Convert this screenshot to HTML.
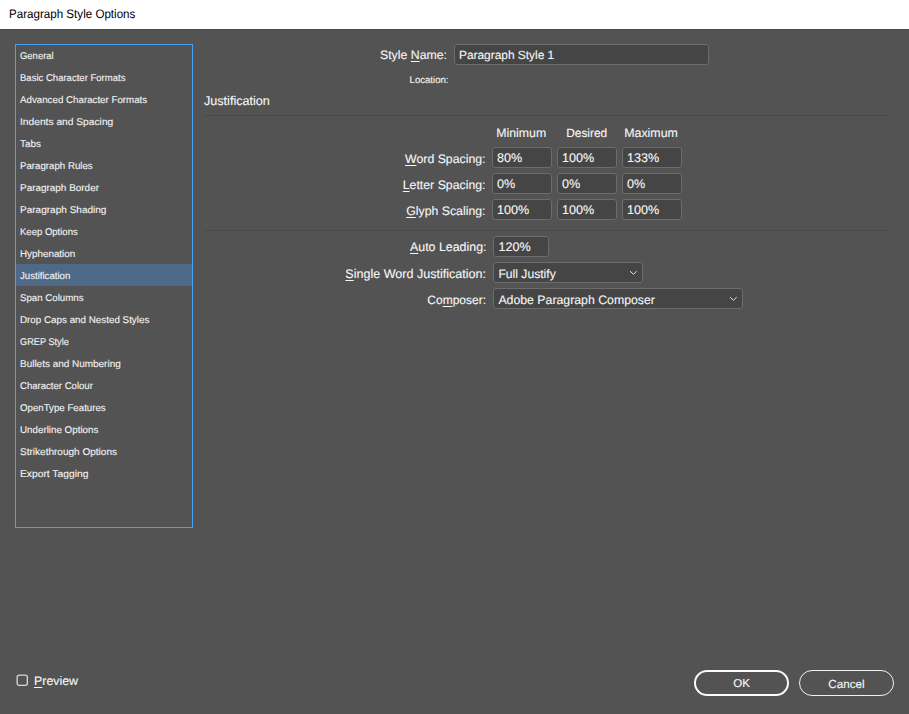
<!DOCTYPE html>
<html><head><meta charset="utf-8"><style>
html,body{margin:0;padding:0;width:909px;height:714px;overflow:hidden;background:#535353;}
body{position:relative;font-family:"Liberation Sans",sans-serif;text-rendering:geometricPrecision;}
.t{position:absolute;white-space:nowrap;-webkit-text-stroke:0.12px currentColor;}
.u{text-decoration:underline;text-decoration-thickness:1px;text-underline-offset:2px;}
.box{position:absolute;background:#454545;border:1px solid #6c6c6c;}
.sep{position:absolute;left:203px;width:686px;height:1px;background:#4a4a4a;}
</style></head><body>
<div style="position:absolute;left:0;top:0;width:909px;height:29px;background:#fff"></div><div style="position:absolute;left:0;top:29px;width:909px;height:1px;background:#4a4a4a"></div><div class="t" style="left:8.50px;top:7.67px;font-size:12.3px;line-height:13.739px;color:#000;-webkit-text-stroke:0;transform:scaleX(0.943);transform-origin:0 0;">Paragraph Style Options</div>
<div style="position:absolute;left:16px;top:264px;width:176px;height:22px;background:#4e6a88"></div><div class="t" style="left:20.00px;top:51.93px;font-size:9.8px;line-height:10.947px;color:#f2f2f2;transform:scaleX(0.966);transform-origin:0 0;">General</div>
<div class="t" style="left:20.00px;top:73.93px;font-size:9.8px;line-height:10.947px;color:#f2f2f2;transform:scaleX(0.973);transform-origin:0 0;">Basic Character Formats</div>
<div class="t" style="left:20.00px;top:95.93px;font-size:9.8px;line-height:10.947px;color:#f2f2f2;transform:scaleX(0.994);transform-origin:0 0;">Advanced Character Formats</div>
<div class="t" style="left:20.00px;top:117.93px;font-size:9.8px;line-height:10.947px;color:#f2f2f2;transform:scaleX(1.044);transform-origin:0 0;">Indents and Spacing</div>
<div class="t" style="left:20.00px;top:139.93px;font-size:9.8px;line-height:10.947px;color:#f2f2f2;transform:scaleX(1.01);transform-origin:0 0;">Tabs</div>
<div class="t" style="left:20.00px;top:161.93px;font-size:9.8px;line-height:10.947px;color:#f2f2f2;transform:scaleX(0.989);transform-origin:0 0;">Paragraph Rules</div>
<div class="t" style="left:20.00px;top:183.93px;font-size:9.8px;line-height:10.947px;color:#f2f2f2;transform:scaleX(1.014);transform-origin:0 0;">Paragraph Border</div>
<div class="t" style="left:20.00px;top:205.93px;font-size:9.8px;line-height:10.947px;color:#f2f2f2;transform:scaleX(1.024);transform-origin:0 0;">Paragraph Shading</div>
<div class="t" style="left:20.00px;top:227.93px;font-size:9.8px;line-height:10.947px;color:#f2f2f2;transform:scaleX(0.972);transform-origin:0 0;">Keep Options</div>
<div class="t" style="left:20.00px;top:249.93px;font-size:9.8px;line-height:10.947px;color:#f2f2f2;transform:scaleX(1.004);transform-origin:0 0;">Hyphenation</div>
<div class="t" style="left:20.00px;top:271.93px;font-size:9.8px;line-height:10.947px;color:#f2f2f2;transform:scaleX(0.982);transform-origin:0 0;">Justification</div>
<div class="t" style="left:20.00px;top:293.93px;font-size:9.8px;line-height:10.947px;color:#f2f2f2;transform:scaleX(0.989);transform-origin:0 0;">Span Columns</div>
<div class="t" style="left:20.00px;top:315.93px;font-size:9.8px;line-height:10.947px;color:#f2f2f2;transform:scaleX(1.002);transform-origin:0 0;">Drop Caps and Nested Styles</div>
<div class="t" style="left:20.00px;top:337.93px;font-size:9.8px;line-height:10.947px;color:#f2f2f2;transform:scaleX(0.937);transform-origin:0 0;">GREP Style</div>
<div class="t" style="left:20.00px;top:359.93px;font-size:9.8px;line-height:10.947px;color:#f2f2f2;transform:scaleX(1.016);transform-origin:0 0;">Bullets and Numbering</div>
<div class="t" style="left:20.00px;top:381.93px;font-size:9.8px;line-height:10.947px;color:#f2f2f2;transform:scaleX(0.977);transform-origin:0 0;">Character Colour</div>
<div class="t" style="left:20.00px;top:403.93px;font-size:9.8px;line-height:10.947px;color:#f2f2f2;transform:scaleX(0.99);transform-origin:0 0;">OpenType Features</div>
<div class="t" style="left:20.00px;top:425.93px;font-size:9.8px;line-height:10.947px;color:#f2f2f2;transform:scaleX(0.999);transform-origin:0 0;">Underline Options</div>
<div class="t" style="left:20.00px;top:447.93px;font-size:9.8px;line-height:10.947px;color:#f2f2f2;transform:scaleX(1.024);transform-origin:0 0;">Strikethrough Options</div>
<div class="t" style="left:20.00px;top:469.93px;font-size:9.8px;line-height:10.947px;color:#f2f2f2;transform:scaleX(1.049);transform-origin:0 0;">Export Tagging</div>
<div style="position:absolute;left:15px;top:44px;width:176px;height:482px;border:1px solid #4aa0f2"></div><div class="t" style="right:462.00px;top:49.37px;font-size:12.3px;line-height:13.739px;color:#f6f6f6;">Style <span class="u">N</span>ame:</div>
<div class="box" style="left:454px;top:44px;width:253px;height:19px;border-radius:3px"></div>
<div class="t" style="left:459.00px;top:49.03px;font-size:11.9px;line-height:13.292px;color:#f6f6f6;">Paragraph Style 1</div>
<div class="t" style="right:460.50px;top:76.11px;font-size:9.6px;line-height:10.723px;color:#f6f6f6;">Location:</div>
<div class="t" style="left:204.00px;top:93.60px;font-size:12.6px;line-height:14.074px;color:#f6f6f6;">Justification</div>
<div class="sep" style="top:115px"></div><div class="t" style="left:496.30px;top:127.17px;font-size:12.3px;line-height:13.739px;color:#f6f6f6;">Minimum</div>
<div class="t" style="left:566.20px;top:126.83px;font-size:11.9px;line-height:13.292px;color:#f6f6f6;">Desired</div>
<div class="t" style="left:624.20px;top:127.08px;font-size:12.4px;line-height:13.851px;color:#f6f6f6;">Maximum</div>
<div class="t" style="right:423.50px;top:152.87px;font-size:12.3px;line-height:13.739px;color:#f6f6f6;"><span class="u">W</span>ord Spacing:</div>
<div class="box" style="left:492px;top:147px;width:58px;height:19px;border-radius:3px"></div>
<div class="t" style="left:497.00px;top:150.60px;font-size:12.6px;line-height:14.074px;color:#f6f6f6;">80%</div>
<div class="box" style="left:557px;top:147px;width:58px;height:19px;border-radius:3px"></div>
<div class="t" style="left:562.00px;top:150.60px;font-size:12.6px;line-height:14.074px;color:#f6f6f6;">100%</div>
<div class="box" style="left:622px;top:147px;width:58px;height:19px;border-radius:3px"></div>
<div class="t" style="left:627.00px;top:150.60px;font-size:12.6px;line-height:14.074px;color:#f6f6f6;">133%</div>
<div class="t" style="right:423.50px;top:178.87px;font-size:12.3px;line-height:13.739px;color:#f6f6f6;"><span class="u">L</span>etter Spacing:</div>
<div class="box" style="left:492px;top:173px;width:58px;height:19px;border-radius:3px"></div>
<div class="t" style="left:497.00px;top:176.60px;font-size:12.6px;line-height:14.074px;color:#f6f6f6;">0%</div>
<div class="box" style="left:557px;top:173px;width:58px;height:19px;border-radius:3px"></div>
<div class="t" style="left:562.00px;top:176.60px;font-size:12.6px;line-height:14.074px;color:#f6f6f6;">0%</div>
<div class="box" style="left:622px;top:173px;width:58px;height:19px;border-radius:3px"></div>
<div class="t" style="left:627.00px;top:176.60px;font-size:12.6px;line-height:14.074px;color:#f6f6f6;">0%</div>
<div class="t" style="right:423.50px;top:204.87px;font-size:12.3px;line-height:13.739px;color:#f6f6f6;"><span class="u">G</span>lyph Scaling:</div>
<div class="box" style="left:492px;top:199px;width:58px;height:19px;border-radius:3px"></div>
<div class="t" style="left:497.00px;top:202.60px;font-size:12.6px;line-height:14.074px;color:#f6f6f6;">100%</div>
<div class="box" style="left:557px;top:199px;width:58px;height:19px;border-radius:3px"></div>
<div class="t" style="left:562.00px;top:202.60px;font-size:12.6px;line-height:14.074px;color:#f6f6f6;">100%</div>
<div class="box" style="left:622px;top:199px;width:58px;height:19px;border-radius:3px"></div>
<div class="t" style="left:627.00px;top:202.60px;font-size:12.6px;line-height:14.074px;color:#f6f6f6;">100%</div>
<div class="sep" style="top:230px"></div><div class="t" style="right:422.50px;top:240.78px;font-size:12.4px;line-height:13.851px;color:#f6f6f6;"><span class="u">A</span>uto Leading:</div>
<div class="box" style="left:493px;top:236px;width:54px;height:19px;border-radius:3px"></div>
<div class="t" style="left:498.50px;top:239.60px;font-size:12.6px;line-height:14.074px;color:#f6f6f6;">120%</div>
<div class="t" style="right:423.00px;top:266.64px;font-size:12.55px;line-height:14.018px;color:#f6f6f6;"><span class="u">S</span>ingle Word Justification:</div>
<div class="box" style="left:493px;top:262px;width:148px;height:19px;border-radius:3px"></div>
<div class="t" style="left:498.40px;top:268.20px;font-size:12.15px;line-height:13.572px;color:#f6f6f6;">Full Justify</div>
<div class="t" style="right:423.00px;top:294.14px;font-size:12.0px;line-height:13.404px;color:#f6f6f6;">Co<span class="u">m</span>poser:</div>
<div class="box" style="left:493px;top:288px;width:248px;height:19px;border-radius:3px"></div>
<div class="t" style="left:498.40px;top:294.07px;font-size:12.3px;line-height:13.739px;color:#f6f6f6;">Adobe Paragraph Composer</div>
<svg style="position:absolute;left:628.0px;top:268.0px" width="11" height="9" viewBox="0 0 11 9"><path d="M2.1 3.2 L5.4 6.3 L8.7 3.2" fill="none" stroke="#e6e6e6" stroke-width="1"/></svg>
<svg style="position:absolute;left:728.0px;top:294.0px" width="11" height="9" viewBox="0 0 11 9"><path d="M2.1 3.2 L5.4 6.3 L8.7 3.2" fill="none" stroke="#e6e6e6" stroke-width="1"/></svg>
<svg style="position:absolute;left:16px;top:674px" width="13" height="13"><rect x="1.15" y="1.15" width="10.2" height="10.2" rx="2" fill="none" stroke="#d8d8d8" stroke-width="1.3"/></svg><div class="t" style="left:34.00px;top:674.78px;font-size:12.4px;line-height:13.851px;color:#f6f6f6;"><span class="u">P</span>review</div>
<div style="position:absolute;left:694px;top:670px;width:91px;height:22px;border:2px solid #fafafa;border-radius:13px"></div><div class="t" style="left:541.50px;width:400px;text-align:center;top:677.89px;font-size:11.5px;line-height:12.845px;color:#f6f6f6;">OK</div>
<div style="position:absolute;left:799px;top:670px;width:93px;height:24px;border:1px solid #f0f0f0;border-radius:13px"></div><div class="t" style="left:646.50px;width:400px;text-align:center;top:677.71px;font-size:11.7px;line-height:13.069px;color:#f6f6f6;">Cancel</div>

</body></html>
